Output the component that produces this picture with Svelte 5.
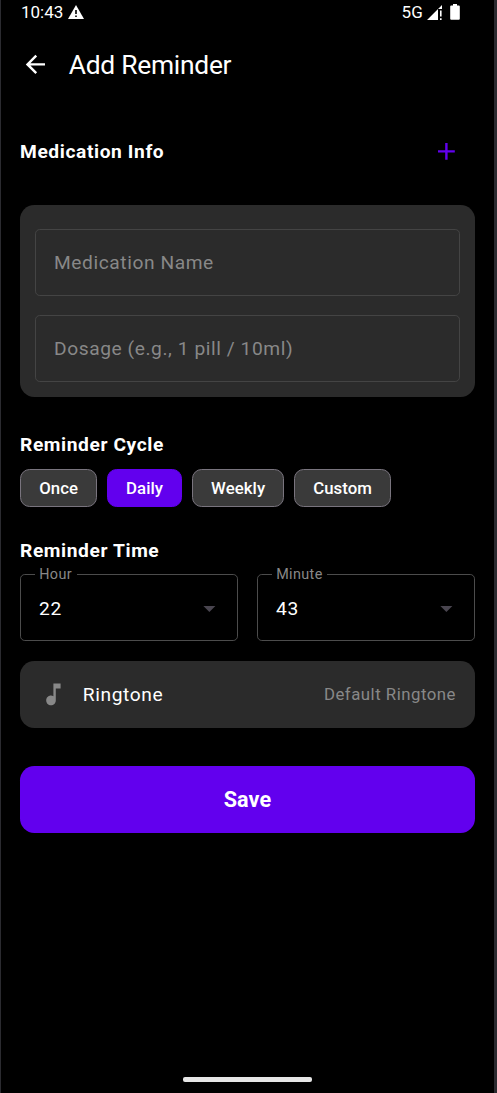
<script>
    let name = $state("");
    let dosage = $state("");
    let cycle = $state("Daily");

    const cycles = ["Once", "Daily", "Weekly", "Custom"];
    const times = [
        { label: "Hour", value: "22" },
        { label: "Minute", value: "43" },
    ];

    function selectCycle(option) {
        cycle = option;
    }
</script>

<div class="screen">
    <div class="status">
        <div class="status__side">
            <span class="clock">10:43</span>
            <svg class="warning" viewBox="0 0 16 14">
                <path d="M8 0 L16 14 H0 Z" fill="#fff" />
                <path d="M7.2 5h1.6v4H7.2z M7.2 10.4h1.6v1.7H7.2z" fill="#000" />
            </svg>
        </div>
        <div class="status__side">
            <span class="network">5G</span>
            <svg class="signal" viewBox="0 0 15 15">
                <path d="M0 15 L15 0 V4 H11 V15 Z" fill="#fff" />
                <path d="M13 5.5h1.6v6H13z M13 13.2h1.6V15H13z" fill="#fff" />
            </svg>
            <svg class="battery" viewBox="0 0 10 16">
                <path d="M3 0h4v1.6h1.8q1 0 1 1v12.2q0 1-1 1H1.2q-1 0-1-1V2.6q0-1 1-1H3z" fill="#fff" />
            </svg>
        </div>
    </div>

    <header class="header">
        <button class="back" aria-label="Back">
            <svg width="28.8" height="28.8" viewBox="0 0 24 24">
                <path d="M20 11H7.83l5.59-5.59L12 4l-8 8 8 8 1.41-1.41L7.83 13H20v-2z" fill="#fff" />
            </svg>
        </button>
        <h1>Add Reminder</h1>
    </header>

    <main class="content">
        <div class="section">
            <h2>Medication Info</h2>
            <button class="add" aria-label="Add medication">
                <svg width="28.8" height="28.8" viewBox="0 0 24 24">
                    <path d="M19 13h-6v6h-2v-6H5v-2h6V5h2v6h6v2z" fill="#6200ee" />
                </svg>
            </button>
        </div>

        <div class="card">
            <input class="input" type="text" placeholder="Medication Name" bind:value={name}>
            <input class="input" type="text" placeholder="Dosage (e.g., 1 pill / 10ml)" bind:value={dosage}>
        </div>

        <h2 class="heading heading__cycle">Reminder Cycle</h2>
        <div class="chips">
            {#each cycles as option}
                <button class="chip" class:chip__active={cycle === option} onclick={() => selectCycle(option)}>{option}</button>
            {/each}
        </div>

        <h2 class="heading heading__time">Reminder Time</h2>
        <div class="times">
            {#each times as time}
                <div class="select">
                    <span class="label">{time.label}</span>
                    <span>{time.value}</span>
                    <svg width="28.8" height="28.8" viewBox="0 0 24 24">
                        <path d="M7 10l5 5 5-5z" fill="#49454f" />
                    </svg>
                </div>
            {/each}
        </div>

        <div class="ringtone">
            <svg width="28.8" height="28.8" viewBox="0 0 24 24">
                <path d="M12 3v10.55c-.59-.34-1.27-.55-2-.55-2.21 0-4 1.79-4 4s1.79 4 4 4 4-1.79 4-4V7h4V3h-6z" fill="#888" />
            </svg>
            <span class="ringtone__title">Ringtone</span>
            <span class="ringtone__value">Default Ringtone</span>
        </div>

        <button class="save">Save</button>
    </main>

    <div class="home"></div>
</div>

<style>
    :global(body) {
        background: #000;
    }

    .screen {
        display: flex;
        flex-direction: column;
        box-sizing: border-box;
        width: 497px;
        height: 1093px;
        overflow: hidden;
        background: #000;
        border-left: 1px solid #2b2b30;
        border-right: 3px solid #2b2b30;
        color: #fff;
        font-family: Roboto, sans-serif;
    }

    h1, h2 {
        margin: 0;
    }

    button {
        padding: 0;
        border: 0;
        background: none;
        color: inherit;
        font-family: inherit;
    }

    svg {
        display: block;
        flex: none;
    }

    .status {
        display: flex;
        justify-content: space-between;
        height: 24px;
        padding: 0 34px 0 20px;
    }

    .status__side {
        display: flex;
        align-items: center;
        font-size: 17px;
    }

    .warning {
        width: 16px;
        height: 14px;
        margin-left: 5px;
    }

    .network {
        letter-spacing: 0.2px;
    }

    .signal {
        width: 15px;
        height: 15px;
        margin-left: 4px;
    }

    .battery {
        width: 10px;
        height: 16px;
        margin-left: 8px;
    }

    .header {
        display: flex;
        align-items: center;
        height: 81px;
        padding-left: 20px;
    }

    h1 {
        margin-left: 19px;
        font-size: 26.4px;
        font-weight: 400;
        letter-spacing: -0.27px;
    }

    .content {
        display: flex;
        flex-direction: column;
        padding: 18px 19px 0;
    }

    .section {
        display: flex;
        align-items: center;
        justify-content: space-between;
        height: 57.6px;
        padding-right: 14.4px;
    }

    h2 {
        font-size: 19.2px;
        line-height: 24px;
        font-weight: 700;
        letter-spacing: 0.6px;
    }

    .card {
        display: flex;
        flex-direction: column;
        gap: 19px;
        box-sizing: border-box;
        height: 192.4px;
        margin-top: 24px;
        padding: 24.4px 15px 0;
        border-radius: 14.4px;
        background: #2b2b2b;
    }

    .input {
        box-sizing: border-box;
        width: 100%;
        height: 67px;
        padding: 0 18px;
        border: 1px solid #444;
        border-radius: 4.8px;
        background: none;
        color: #fff;
        font-family: inherit;
        font-size: 19.2px;
        letter-spacing: 0.57px;
    }

    .input::placeholder {
        color: #888;
    }

    .heading__cycle {
        margin-top: 36px;
    }

    .chips {
        display: flex;
        gap: 9.6px;
        margin-top: 12px;
    }

    .chip {
        height: 38px;
        padding: 0 18.2px;
        border: 1px solid #79747e;
        border-radius: 9.6px;
        background: #3a3a3a;
        font-size: 16.8px;
        font-weight: 500;
        letter-spacing: 0.06px;
    }

    .chip__active {
        border-color: #6200ee;
        background: #6200ee;
    }

    .heading__time {
        margin-top: 32px;
    }

    .times {
        display: flex;
        gap: 19px;
        margin-top: 11px;
    }

    .select {
        position: relative;
        display: flex;
        flex: 1;
        align-items: center;
        justify-content: space-between;
        box-sizing: border-box;
        height: 67.4px;
        padding: 1px 13px 0 18px;
        border: 1px solid #4c4c4c;
        border-radius: 4.8px;
        font-size: 19.2px;
        letter-spacing: 0.6px;
    }

    /* sits on the outline and cuts it */
    .label {
        position: absolute;
        top: -9px;
        left: 14px;
        padding: 0 4.8px 0 4.2px;
        background: #000;
        color: #888;
        font-size: 14.4px;
        line-height: 17px;
        letter-spacing: 0.36px;
    }

    .ringtone {
        display: flex;
        align-items: center;
        height: 67px;
        margin-top: 19.6px;
        padding: 0 19px;
        border-radius: 14.4px;
        background: #2b2b2b;
    }

    .ringtone__title {
        margin-left: 15px;
        font-size: 19.2px;
        letter-spacing: 0.6px;
    }

    .ringtone__value {
        margin-left: auto;
        color: #888;
        font-size: 16.8px;
        line-height: 20px;
        padding-bottom: 1px;
        letter-spacing: 0.5px;
    }

    .save {
        height: 67px;
        margin-top: 38px;
        border-radius: 14.4px;
        background: #6200ee;
        font-size: 21.6px;
        font-weight: 700;
        letter-spacing: 0.12px;
    }

    .home {
        width: 129px;
        height: 4.6px;
        margin: auto auto 11px;
        border-radius: 2px;
        background: #e6e6e6;
    }
</style>
